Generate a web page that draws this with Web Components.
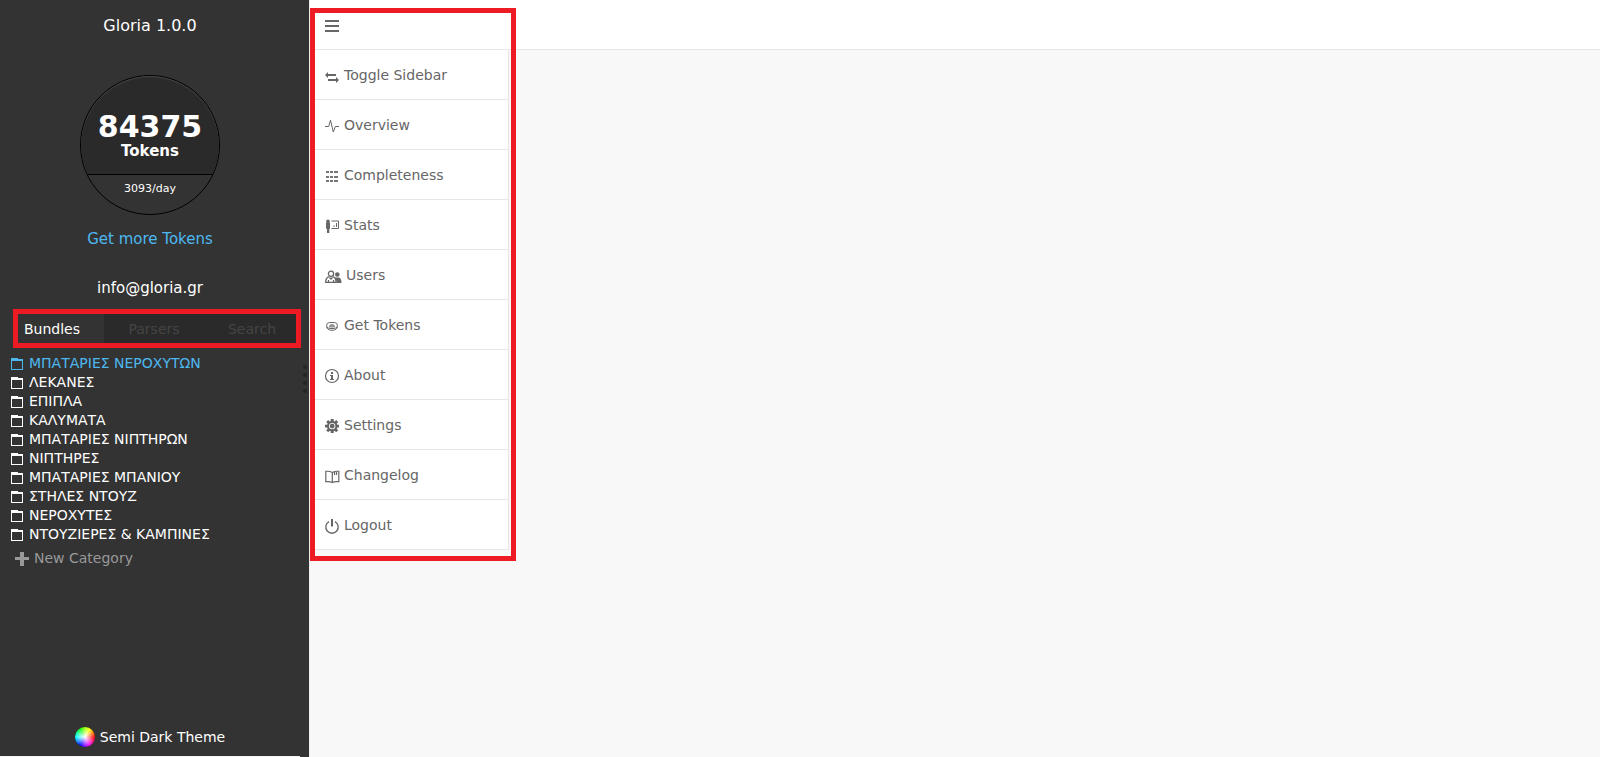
<!DOCTYPE html>
<html lang="en">
<head>
<meta charset="utf-8">
<title>Gloria</title>
<style>
    body {
        margin: 0;
        font-family: "DejaVu Sans", Verdana, sans-serif;
        font-size: 14px;
        background: #f8f8f8;
    }
    gl-app { --accent: #4db8f0; --dark: #333; --darker: #2a2a2a; --line: #e6e6e6; }
    .tabs-frame { --inset: -5px -1px -4px 13px; }
    .menu-frame { --inset: 8px -7px -11px 0; }
</style>
</head>
<body>
    <gl-app>
        <gl-sidebar slot="sidebar" heading="Gloria 1.0.0" email="info@gloria.gr" theme="Semi Dark Theme">
            <gl-tokens slot="tokens" count="84375" rate="3093/day"></gl-tokens>
            <gl-frame class="tabs-frame">
                <gl-tabs></gl-tabs>
            </gl-frame>
            <gl-folders></gl-folders>
        </gl-sidebar>
        <gl-frame slot="menu" class="menu-frame">
            <gl-menu>
                <gl-menu-item icon="toggle">Toggle Sidebar</gl-menu-item>
                <gl-menu-item icon="overview">Overview</gl-menu-item>
                <gl-menu-item icon="grid">Completeness</gl-menu-item>
                <gl-menu-item icon="stats">Stats</gl-menu-item>
                <gl-menu-item icon="users">Users</gl-menu-item>
                <gl-menu-item icon="token">Get Tokens</gl-menu-item>
                <gl-menu-item icon="about">About</gl-menu-item>
                <gl-menu-item icon="settings">Settings</gl-menu-item>
                <gl-menu-item icon="book">Changelog</gl-menu-item>
                <gl-menu-item icon="power">Logout</gl-menu-item>
            </gl-menu>
        </gl-frame>
    </gl-app>

    <template id="app-template">
        <style>
            :host { display: grid; grid-template-columns: auto 1fr; min-height: 100vh; }
            header { height: 49px; background: #fff; border-bottom: 1px solid var(--line); }
            .menu { width: 199px; }
        </style>
        <slot name="sidebar"></slot>
        <main>
            <header><div class="menu"><slot name="menu"></slot></div></header>
        </main>
    </template>

    <template id="sidebar-template">
        <style>
            :host {
                display: grid;
                grid-template-columns: 300px 9px;
                background: var(--dark);
                color: #fff;
                border-right: 1px solid #eee;
            }
            .content { display: flex; flex-direction: column; }
            h1 { margin: 0 0 23px; font-size: 16px; font-weight: normal; line-height: 52px; text-align: center; }
            .line { font-size: 15px; line-height: 49px; text-align: center; }
            .email { margin-bottom: 1px; }
            a { color: var(--accent); text-decoration: none; }
            footer {
                margin-top: auto;
                padding-bottom: 9px;
                border-bottom: 1px solid #f4f4f4;
                display: flex;
                justify-content: center;
            }
            footer button {
                display: flex;
                gap: 5px;
                padding: 0;
                border: 0;
                background: none;
                color: inherit;
                font: inherit;
                line-height: 20px;
            }
            .wheel {
                width: 20px;
                height: 20px;
                border-radius: 50%;
                background:
                    radial-gradient(circle, #fff, transparent 70%),
                    conic-gradient(#9f0, #ff0 30deg, #f00 90deg, #f0f 150deg, #00f 210deg, #0ff 270deg, #0f0 330deg, #9f0);
            }
            .handle { display: flex; flex-direction: column; align-items: center; justify-content: center; gap: 4px; }
            .handle i { width: 4px; height: 4px; border-radius: 50%; background: #262626; }
        </style>
        <div class="content">
            <h1></h1>
            <slot name="tokens"></slot>
            <div class="line"><a href="#">Get more Tokens</a></div>
            <div class="line email"></div>
            <slot></slot>
            <footer><button type="button"><span class="wheel"></span><span class="theme"></span></button></footer>
        </div>
        <div class="handle"><i></i><i></i><i></i><i></i></div>
    </template>

    <template id="tokens-template">
        <style>
            :host {
                display: block;
                box-sizing: border-box;
                width: 140px;
                height: 140px;
                margin: 0 auto;
                border: 1px solid #000;
                border-radius: 50%;
                overflow: hidden;
                text-align: center;
            }
            .top {
                box-sizing: border-box;
                height: 99px;
                padding-top: 35px;
                background: var(--darker);
                border-bottom: 1px solid #000;
                border-radius: 69px 69px 0 0;
                box-shadow: inset 0 1px 1px #484848;
                font-weight: bold;
            }
            .count { font-size: 30px; line-height: 32px; }
            .label { font-size: 15px; line-height: 16px; }
            .rate { font-size: 11px; line-height: 28px; }
        </style>
        <div class="top">
            <div class="count"></div>
            <div class="label">Tokens</div>
        </div>
        <div class="rate"></div>
    </template>

    <template id="tabs-template">
        <style>
            :host { display: grid; grid-template-columns: 104px 100px 1fr; background: var(--darker); }
            button { padding: 0; border: 0; background: none; color: #444; font: inherit; line-height: 30px; }
            button[aria-selected=true] { background: var(--dark); color: #fff; }
        </style>
        <button type="button" role="tab" aria-selected="true">Bundles</button>
        <button type="button" role="tab">Parsers</button>
        <button type="button" role="tab">Search</button>
    </template>

    <template id="folders-template">
        <style>
            :host { display: block; padding: 10px 0 0 11px; }
            ul { margin: 0; padding: 0; list-style: none; }
            a { display: flex; gap: 6px; line-height: 19px; color: inherit; text-decoration: none; }
            a.active { color: var(--accent); }
            svg { width: 12px; height: 12px; margin-top: 4px; }
            button {
                display: flex;
                gap: 5px;
                padding: 0 0 0 4px;
                border: 0;
                background: none;
                color: #999;
                font: inherit;
                line-height: 28px;
            }
            button svg { width: 14px; height: 14px; margin-top: 8px; }
        </style>
        <ul></ul>
        <button type="button">
            <svg viewBox="0 0 14 14"><path d="M5 0h4v5h5v3H9v6H5V8H0V5h5z" fill="currentColor"/></svg>New Category
        </button>
    </template>

    <template id="menu-template">
        <style>
            :host { display: block; color: #666; }
            button { display: flex; align-items: center; height: 49px; padding: 0 15px; border: 0; background: none; color: inherit; }
            nav { margin-top: 1px; background: #fff; border-right: 1px solid var(--line); }
        </style>
        <button type="button" aria-label="Menu"><gl-icon name="burger"></gl-icon></button>
        <nav><slot></slot></nav>
    </template>

    <template id="item-template">
        <style>
            :host { display: block; border-bottom: 1px solid var(--line); }
            a {
                display: flex;
                align-items: center;
                gap: 5px;
                height: 49px;
                padding-left: 15px;
                color: inherit;
                text-decoration: none;
            }
        </style>
        <a href="#"><gl-icon></gl-icon><span><slot></slot></span></a>
    </template>

    <script>
        const stamp = (el, id) => {
            el.attachShadow({mode: 'open'});
            el.shadowRoot.append(document.getElementById(id).content.cloneNode(true));
            return el.shadowRoot;
        }

        // 14px high icons, [width, shapes]
        const icons = {
            burger: [14, '<path d="M0 1h14v2H0zM0 6h14v2H0zM0 11h14v2H0z"/>'],
            toggle: [14, '<path d="M0 6L3 3v2h8v2H3v2zM3 10h8V8l3 3-3 3v-2H3z"/>'],
            overview: [14, '<path d="M0 7.5h3.7L5.5 1.2 8.3 13l2-5.5H14" fill="none" stroke="currentColor"/>'],
            grid: [14, '<path d="M1 2h3v2H1zM5 2h3v2H5zM9 2h4v2H9zM1 7h3v2H1zM5 7h3v2H5zM9 7h4v2H9zM1 11h3v2H1zM5 11h3v2H5zM9 11h4v2H9z" opacity=".9"/>'],
            stats: [14, '<circle cx="3" cy="2.2" r="1.8"/><path d="M1 4q0-.7.7-.7h2.600Q5 3.300 5 4v5.500l-.7.5v4H2v-4l-1-.5z"/><path d="M6.500 2h7v7.500H6.500M9 8V6.500M11.500 8V4" fill="none" stroke="currentColor"/>'],
            users: [16, '<circle cx="12.300" cy="5.500" r="2.300"/><path d="M10 8.500h4q2.500 1 2.500 5.500h-5q0-3.500-1.500-5.500z"/><g fill="none" stroke="currentColor" stroke-width="1.300"><circle cx="6" cy="4.800" r="2.600"/><path d="M4.300 7.700Q.7 8.500.7 13.300H11Q11 8.500 7.700 7.700M3.500 13v-2M8.500 13v-2M4.500 8.500L6 10l1.500-1.500"/></g>'],
            token: [14, '<g fill="none" stroke="currentColor"><rect x="1.600" y="3.500" width="10.800" height="6" rx="3"/><path d="M1.600 7.500Q2 11.300 7 11.300t5.400-3.800"/></g><path d="M4 8.500V7q.5-2 3-2t3 2v1.500z" opacity=".7"/>'],
            about: [14, '<circle cx="7" cy="7" r="6.500" fill="none" stroke="currentColor" stroke-width="1.200"/><path d="M6 3h2v2H6zM5 6h3v4h1v1H5v-1h1V7H5z"/>'],
            settings: [14, '<path fill-rule="evenodd" d="M5.700 0h3v2l1 .4 1.500-1.400 2 2-1.400 1.500.4 1.200H14v2.800h-1.800l-.4 1.200 1.400 1.500-2 2-1.500-1.400-1 .4V14h-3v-1.800l-1-.4-1.500 1.400-2-2 1.400-1.500-.4-1.200H0V5.700h2.200l.4-1.200L1.200 3l2-2 1.500 1.400 1-.4zM7.200 3.900a3.200 3.200 0 1 0 0 6.400 3.200 3.200 0 0 0 0-6.400z"/><circle cx="7.200" cy="7.100" r="2.400"/>'],
            book: [14, '<path d="M7.300 13.300V3.500Q5 2 .8 2.300v10.400q4.200-.5 6.500.8 2.300-1.300 6.500-.8V2.300Q10 2 7.300 3.500M9.500 2.500V6M11.500 2.500V6" fill="none" stroke="currentColor" stroke-width="1.200"/>'],
            power: [14, '<path d="M4 2.600a6.200 6.200 0 1 0 6 0" fill="none" stroke="currentColor" stroke-width="1.300"/><path d="M6 0h2v7.500H6z"/>']
        };

        class GlIcon extends HTMLElement {
            connectedCallback() {
                const [width, shapes] = icons[this.getAttribute('name')];
                this.attachShadow({mode: 'open'});
                this.shadowRoot.innerHTML = `
                    <style>:host { display: block; margin-top: 3px; } svg { display: block; overflow: visible; }</style>
                    <svg width="${width}" height="14" viewBox="0 0 ${width} 14" fill="currentColor">${shapes}</svg>`;
            }
        }

        // red outline laid over whatever is slotted in
        class GlFrame extends HTMLElement {
            connectedCallback() {
                this.attachShadow({mode: 'open'});
                this.shadowRoot.innerHTML = `
                    <style>
                        :host { display: block; position: relative; }
                        :host::after { content: ""; position: absolute; inset: var(--inset, 0); border: 5px solid #ed1c24; pointer-events: none; }
                    </style>
                    <slot></slot>`;
            }
        }

        class GlApp extends HTMLElement {
            connectedCallback() {
                stamp(this, 'app-template');
            }
        }

        class GlSidebar extends HTMLElement {
            connectedCallback() {
                const root = stamp(this, 'sidebar-template');
                root.querySelector('h1').textContent = this.getAttribute('heading');
                root.querySelector('.email').textContent = this.getAttribute('email');
                root.querySelector('.theme').textContent = this.getAttribute('theme');
            }
        }

        class GlTokens extends HTMLElement {
            connectedCallback() {
                const root = stamp(this, 'tokens-template');
                root.querySelector('.count').textContent = this.getAttribute('count');
                root.querySelector('.rate').textContent = this.getAttribute('rate');
            }
        }

        class GlTabs extends HTMLElement {
            connectedCallback() {
                this.setAttribute('role', 'tablist');
                stamp(this, 'tabs-template');
            }
        }

        const folders = ['ΜΠΑΤΑΡΙΕΣ ΝΕΡΟΧΥΤΩΝ', 'ΛΕΚΑΝΕΣ', 'ΕΠΙΠΛΑ', 'ΚΑΛΥΜΑΤΑ', 'ΜΠΑΤΑΡΙΕΣ ΝΙΠΤΗΡΩΝ', 'ΝΙΠΤΗΡΕΣ',
            'ΜΠΑΤΑΡΙΕΣ ΜΠΑΝΙΟΥ', 'ΣΤΗΛΕΣ ΝΤΟΥΖ', 'ΝΕΡΟΧΥΤΕΣ', 'ΝΤΟΥΖΙΕΡΕΣ &amp; ΚΑΜΠΙΝΕΣ'];

        class GlFolders extends HTMLElement {
            connectedCallback() {
                const root = stamp(this, 'folders-template');
                root.querySelector('ul').innerHTML = folders.map((name, i) => `
                    <li><a href="#" class="${i == 0 ? 'active' : ''}">
                        <svg viewBox="0 0 12 12"><path fill="currentColor" fill-rule="evenodd" d="M0 0h7v1h5v11H0zM1 3v8h10V3z"/></svg>
                        <span>${name}</span>
                    </a></li>`).join('');
            }
        }

        class GlMenu extends HTMLElement {
            connectedCallback() {
                stamp(this, 'menu-template');
            }
        }

        class GlMenuItem extends HTMLElement {
            connectedCallback() {
                this.attachShadow({mode: 'open'});
                const content = document.querySelector('#item-template').content.cloneNode(true);
                content.querySelector('gl-icon').setAttribute('name', this.getAttribute('icon'));
                this.shadowRoot.append(content);
            }
        }

        customElements.define('gl-icon', GlIcon);
        customElements.define('gl-frame', GlFrame);
        customElements.define('gl-app', GlApp);
        customElements.define('gl-sidebar', GlSidebar);
        customElements.define('gl-tokens', GlTokens);
        customElements.define('gl-tabs', GlTabs);
        customElements.define('gl-folders', GlFolders);
        customElements.define('gl-menu', GlMenu);
        customElements.define('gl-menu-item', GlMenuItem);
    </script>
</body>
</html>
